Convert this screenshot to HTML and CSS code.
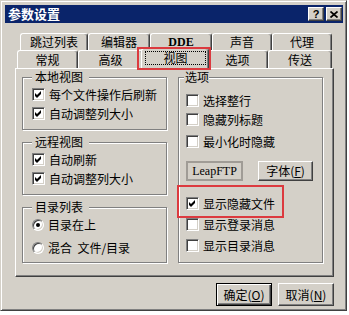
FILE: index.html
```html
<!DOCTYPE html>
<html lang="zh">
<head>
    <meta charset="UTF-8">
    <title>参数设置</title>
    <link rel="stylesheet" href="styles.css">
</head>
<body>
    <div class="window">
        <div class="titlebar">
            <span class="title">参数设置</span>
            <div class="caption-btns">
                <span class="cap-btn help">?</span>
                <span class="cap-btn">
                    <svg width="8" height="7" viewBox="0 0 8 7"><path d="M0.5 0.5 L7.5 6.5 M7.5 0.5 L0.5 6.5" stroke="#000" stroke-width="1.7"/></svg>
                </span>
            </div>
        </div>

        <div class="dialog">
            <div class="tabs">
                <div class="tab-row back">
                    <div class="tab">跳过列表</div>
                    <div class="tab">编辑器</div>
                    <div class="tab latin">DDE</div>
                    <div class="tab">声音</div>
                    <div class="tab">代理</div>
                </div>
                <div class="tab-row front">
                    <div class="tab">常规</div>
                    <div class="tab">高级</div>
                    <div class="tab active marked"><span class="focus">视图</span></div>
                    <div class="tab">选项</div>
                    <div class="tab">传送</div>
                </div>
            </div>

            <div class="sheet">
                <div class="col">
                    <fieldset class="group local">
                        <legend>本地视图</legend>
                        <div class="row"><span class="check on"><svg width="11" height="11" viewBox="0 0 11 11"><path d="M2 4 L4 6 L8 2 L8 5 L4 9 L2 7 Z"/></svg></span>每个文件操作后刷新</div>
                        <div class="row"><span class="check on"><svg width="11" height="11" viewBox="0 0 11 11"><path d="M2 4 L4 6 L8 2 L8 5 L4 9 L2 7 Z"/></svg></span>自动调整列大小</div>
                    </fieldset>
                    <fieldset class="group remote">
                        <legend>远程视图</legend>
                        <div class="row"><span class="check on"><svg width="11" height="11" viewBox="0 0 11 11"><path d="M2 4 L4 6 L8 2 L8 5 L4 9 L2 7 Z"/></svg></span>自动刷新</div>
                        <div class="row"><span class="check on"><svg width="11" height="11" viewBox="0 0 11 11"><path d="M2 4 L4 6 L8 2 L8 5 L4 9 L2 7 Z"/></svg></span>自动调整列大小</div>
                    </fieldset>
                    <fieldset class="group dirs">
                        <legend>目录列表</legend>
                        <div class="row radio-row"><span class="radio on"></span>目录在上</div>
                        <div class="row radio-row"><span class="radio"></span>混合&nbsp;&nbsp;文件/目录</div>
                    </fieldset>
                </div>

                <div class="col">
                    <fieldset class="group options">
                        <legend>选项</legend>
                        <div class="row"><span class="check"></span>选择整行</div>
                        <div class="row"><span class="check"></span>隐藏列标题</div>
                        <div class="row gap-s"><span class="check"></span>最小化时隐藏</div>
                        <div class="btn-row">
                            <span class="font-sample">LeapFTP</span>
                            <button class="btn font-btn">字体(<u>F</u>)</button>
                        </div>
                        <div class="row gap-l marked"><span class="check on"><svg width="11" height="11" viewBox="0 0 11 11"><path d="M2 4 L4 6 L8 2 L8 5 L4 9 L2 7 Z"/></svg></span>显示隐藏文件</div>
                        <div class="row gap-xs"><span class="check"></span>显示登录消息</div>
                        <div class="row gap-xs"><span class="check"></span>显示目录消息</div>
                    </fieldset>
                </div>
            </div>

            <div class="actions">
                <button class="btn default">确定(<u>O</u>)</button>
                <button class="btn">取消(<u>N</u>)</button>
            </div>
        </div>
    </div>
</body>
</html>
```

FILE: styles.css
```css
body {
    margin: 0;
    background: #fff;
    font-family: "Noto Sans CJK SC", sans-serif;
    font-size: 12px;
    color: #000;
}

.window {
    width: 347px;
    height: 311px;
    box-sizing: border-box;
    background: #d4d0c8;
    border: 1px solid;
    border-color: #d4d0c8 #404040 #404040 #d4d0c8;
    box-shadow: inset 1px 1px 0 #fff, inset -1px -1px 0 #808080;
    padding: 4px 3px 4px 4px;
}

.titlebar {
    height: 18px;
    background: #0a246a;
    display: flex;
    align-items: center;
    justify-content: space-between;
    padding: 0 1px 0 3px;
}

.title {
    color: #fff;
    font-weight: bold;
    font-size: 13px;
    line-height: 16px;
}

.caption-btns {
    display: flex;
    gap: 2px;
}

.cap-btn {
    width: 16px;
    height: 14px;
    box-sizing: border-box;
    background: #d4d0c8;
    border: 1px solid;
    border-color: #fff #404040 #404040 #fff;
    box-shadow: inset -1px -1px 0 #808080;
    display: flex;
    align-items: center;
    justify-content: center;
}

.cap-btn.help {
    font-family: "Liberation Sans", sans-serif;
    font-weight: bold;
    font-size: 11px;
    line-height: 12px;
}

.dialog {
    padding: 10px 0 0 10px;
}

/* tabs */
.tab-row {
    display: flex;
}

.tab-row.back {
    height: 17px;
    margin-left: 5px;
}

.tab-row.front {
    height: 18px;
    margin-left: 2px;
    align-items: flex-end;
}

.tab {
    box-sizing: border-box;
    height: 100%;
    border-top: 1px solid #fff;
    border-left: 1px solid #fff;
    border-right: 1px solid #404040;
    border-radius: 3px 3px 0 0;
    box-shadow: inset -1px 0 0 #808080;
    display: flex;
    align-items: center;
    justify-content: center;
    line-height: 14px;
}

.back .tab:nth-child(1) { width: 68px; }
.back .tab:nth-child(2) { width: 62px; }
.back .tab:nth-child(3) { width: 62px; }
.back .tab:nth-child(4) { width: 60px; }
.back .tab:nth-child(5) { width: 60px; }

.front .tab:nth-child(1) { width: 61px; }
.front .tab:nth-child(2) { width: 65px; }
.front .tab:nth-child(3) { width: 68px; }
.front .tab:nth-child(4) { width: 61px; }
.front .tab:nth-child(5) { width: 64px; }

.tab.latin {
    font-family: "Liberation Serif", serif;
    font-weight: bold;
    font-size: 12px;
}

.tab.active {
    position: relative;
    z-index: 1;
    height: 21px;
    margin: 0 -2px -1px -2px;
    background: #d4d0c8;
    padding: 2px 2px 4px 3px;
    align-items: stretch;
}

.focus {
    flex: 1;
    border: 1px dotted #000;
    display: flex;
    align-items: center;
    justify-content: center;
}

.marked {
    position: relative;
}

.marked::after {
    content: '';
    position: absolute;
    border: 2px solid #dc3a3f;
    pointer-events: none;
}

.tab.marked::after {
    left: -5px;
    right: -3px;
    top: -2px;
    bottom: -1px;
}

.row.marked::after {
    left: -9px;
    top: -9px;
    width: 107px;
    height: 33px;
    box-sizing: border-box;
}

/* sheet */
.sheet {
    width: 319px;
    height: 209px;
    box-sizing: border-box;
    border: 1px solid;
    border-color: #fff #404040 #404040 #fff;
    box-shadow: inset -1px -1px 0 #808080;
    padding: 1px 10px 0 6px;
    display: grid;
    grid-template-columns: 145px 145px;
    column-gap: 11px;
    align-items: start;
}

.col {
    display: flex;
    flex-direction: column;
    gap: 5px;
}

.group {
    margin: 0;
    min-width: 0;
    border: 1px solid #808080;
    box-shadow: inset 1px 1px 0 #fff, 1px 1px 0 #fff;
    padding: 1px 0 6px 9px;
}

.group legend {
    background: #d4d0c8;
    padding: 0 6px 0 3px;
    line-height: 14px;
}

.group.dirs {
    padding-top: 0;
    padding-bottom: 4px;
}

.group.options {
    padding: 7px 0 7px 7px;
}

.group.options legend {
    margin-left: -2px;
    padding: 0 0 0 1px;
}

.row {
    height: 19px;
    display: flex;
    align-items: center;
    gap: 4px;
    line-height: 14px;
}

.radio-row {
    height: 21px;
}

.radio-row + .radio-row {
    margin-top: 2px;
}

.gap-s { margin-top: 3px; }
.gap-l { margin-top: 13px; }
.gap-xs { margin-top: 2px; }

.check {
    width: 13px;
    height: 13px;
    box-sizing: border-box;
    flex: none;
    background: #fff;
    border: 1px solid;
    border-color: #808080 #fff #fff #808080;
    box-shadow: inset 1px 1px 0 #404040, inset -1px -1px 0 #d4d0c8;
}

.check svg {
    display: block;
    fill: #000;
}

.radio {
    width: 12px;
    height: 12px;
    box-sizing: border-box;
    flex: none;
    border-radius: 50%;
    background: #fff;
    border: 1px solid;
    border-color: #808080 #fff #fff #808080;
    box-shadow: inset 1px 1px 0 #404040, inset -1px -1px 0 #d4d0c8;
    display: grid;
    place-items: center;
}

.radio.on::after {
    content: '';
    width: 4px;
    height: 4px;
    border-radius: 50%;
    background: #000;
}

.btn-row {
    display: flex;
    align-items: center;
    gap: 15px;
    margin-top: 10px;
    height: 20px;
}

.font-sample {
    width: 57px;
    height: 20px;
    box-sizing: border-box;
    border: 2px solid #a09c96;
    font-family: "Liberation Serif", serif;
    font-size: 12px;
    display: flex;
    align-items: center;
    justify-content: center;
}

.btn {
    box-sizing: border-box;
    background: #d4d0c8;
    border: 1px solid;
    border-color: #fff #404040 #404040 #fff;
    box-shadow: inset -1px -1px 0 #808080;
    font-family: "Noto Sans CJK SC", sans-serif;
    font-size: 12px;
    line-height: 14px;
    color: #000;
    padding: 0;
}

.font-btn {
    width: 55px;
    height: 20px;
}

.actions {
    width: 319px;
    display: flex;
    justify-content: flex-end;
    gap: 6px;
    margin-top: 6px;
}

.actions .btn {
    width: 56px;
    height: 23px;
}

.btn.default {
    border: 1px solid #000;
    box-shadow: inset 1px 1px 0 #fff, inset -1px -1px 0 #404040, inset -2px -2px 0 #808080;
}
```
